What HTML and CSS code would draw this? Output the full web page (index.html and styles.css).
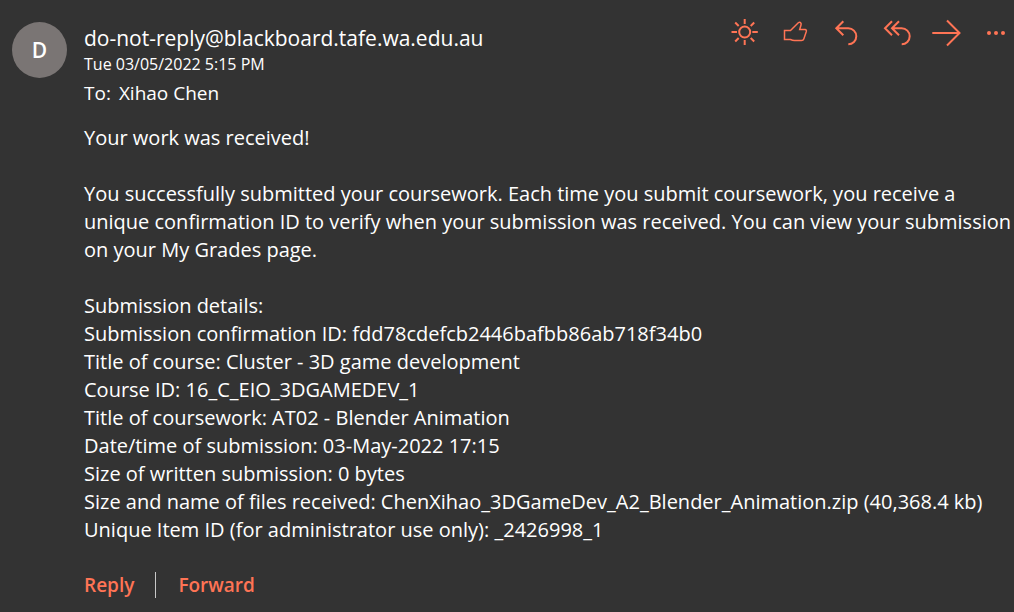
FILE: index.html
```html
<!DOCTYPE html>
<html lang="en">
<head>
<meta charset="utf-8">
<title>Your work was received!</title>
<link rel="stylesheet" href="styles.css">
</head>
<body>
<article class="message">
  <div class="avatar" aria-hidden="true">D</div>
  <div class="main">
    <header class="header">
      <div class="meta">
        <h1 class="sender">do-not-reply@blackboard.tafe.wa.edu.au</h1>
        <time class="date" datetime="2022-05-03T17:15">Tue 03/05/2022 5:15 PM</time>
        <div class="to"><span>To:</span><span>Xihao Chen</span></div>
      </div>
      <div class="toolbar">
        <button class="icon" type="button" aria-label="Turn on the lights"><svg width="28" height="28" viewBox="0 0 28 28"><circle cx="13.7" cy="14" r="5.5"/><path d="M13.700 1v5M13.700 22v5M.5 14h5.500M21.300 14h5.500M4.200 4.500l3.500 3.500M19.700 20l3.500 3.500M4.200 23.500L7.700 20M19.700 8l3.500-3.500"/></svg></button>
        <button class="icon" type="button" aria-label="Like"><svg class="thin" width="28" height="28" viewBox="0 0 28 28"><path d="M2.500 12.500H8.500L16.300 4.800Q18 3.300 19 5.300Q19.300 6 19 7L17.700 11.500L23 11.500Q24.800 11.800 24.300 13.500L21.800 21Q21.300 22.500 19.500 22.500H12.500Q10.500 22.500 8.500 21.500H2.500Z"/></svg></button>
        <button class="icon" type="button" aria-label="Reply"><svg width="28" height="28" viewBox="0 0 28 28"><path d="M10.300 3.300l-7 7 7 7M3.300 10.300h12a8 8 0 0 1 0 16"/></svg></button>
        <button class="icon" type="button" aria-label="Reply all"><svg width="28" height="28" viewBox="0 0 28 28"><path d="M8 3.300l-7 7 7 7M15 3.300l-7 7 7 7M8 10.300h9.700a8 8 0 0 1 0 16"/></svg></button>
        <button class="icon" type="button" aria-label="Forward"><svg width="28" height="28" viewBox="0 0 28 28"><path d="M-2.700 15H25M12 2.500l12.500 12.500L12 27.500"/></svg></button>
        <button class="icon more" type="button" aria-label="More actions"><svg width="20" height="28" viewBox="0 0 20 28"><circle cx="3" cy="15" r="2"/><circle cx="10" cy="15" r="2"/><circle cx="17" cy="15" r="2"/></svg></button>
      </div>
    </header>
    <div class="body">
      <p>Your work was received!</p>
      <p>You successfully submitted your coursework. Each time you submit coursework, you receive a unique confirmation ID to verify when your submission was received. You can view your submission on your My Grades page.</p>
      <p>Submission details:<br>
      Submission confirmation ID: fdd78cdefcb2446bafbb86ab718f34b0<br>
      Title of course: Cluster - 3D game development<br>
      Course ID: 16_C_EIO_3DGAMEDEV_1<br>
      Title of coursework: AT02 - Blender Animation<br>
      Date/time of submission: 03-May-2022 17:15<br>
      Size of written submission: 0 bytes<br>
      Size and name of files received: ChenXihao_3DGameDev_A2_Blender_Animation.zip (40,368.4 kb)<br>
      Unique Item ID (for administrator use only): _2426998_1</p>
    </div>
    <footer class="actions">
      <button class="action" type="button">Reply</button>
      <button class="action" type="button">Forward</button>
    </footer>
  </div>
</article>
</body>
</html>
```
FILE: styles.css
```css
* { box-sizing: border-box; }
body { margin: 0; min-height: 100vh; background: #333; color: #fff; font-family: "Segoe UI", "Open Sans", "Noto Sans", sans-serif; }
.message { display: flex; gap: 17px; padding: 22px 0 12px 12px; }
.avatar { flex: none; display: flex; align-items: center; justify-content: center; width: 55px; height: 56px; border-radius: 50%; background: #7a7574; font-size: 21px; font-weight: 600; }
.main { flex: 1; min-width: 0; }
.header { display: flex; justify-content: space-between; align-items: flex-start; padding-right: 8px; }
.sender { margin: 0; font-size: 21px; line-height: 32px; font-weight: 400; }
.date { display: block; font-size: 16px; line-height: 20px; }
.to { display: flex; gap: 8px; padding-top: 5px; font-size: 19px; line-height: 28px; }
.toolbar { display: flex; gap: 23px; margin-top: -4px; }
.icon { display: block; padding: 0; border: 0; background: none; color: #ff7455; cursor: pointer; }
.icon svg { display: block; overflow: visible; fill: none; stroke: currentColor; stroke-width: 2; }
.icon .thin { stroke-width: 1.5; }
.icon.more svg { fill: currentColor; stroke: none; }
.body { padding-top: 17px; font-size: 20px; line-height: 28px; }
.body p { margin: 0 0 28px; }
.actions { display: flex; }
.action { padding: 0; border: 0; background: none; color: #ff7455; font: 600 19px/26px "Segoe UI", "Open Sans", "Noto Sans", sans-serif; cursor: pointer; }
.action + .action { margin-left: 21px; padding-left: 22px; border-left: 1px solid #c8c8c8; }
```
